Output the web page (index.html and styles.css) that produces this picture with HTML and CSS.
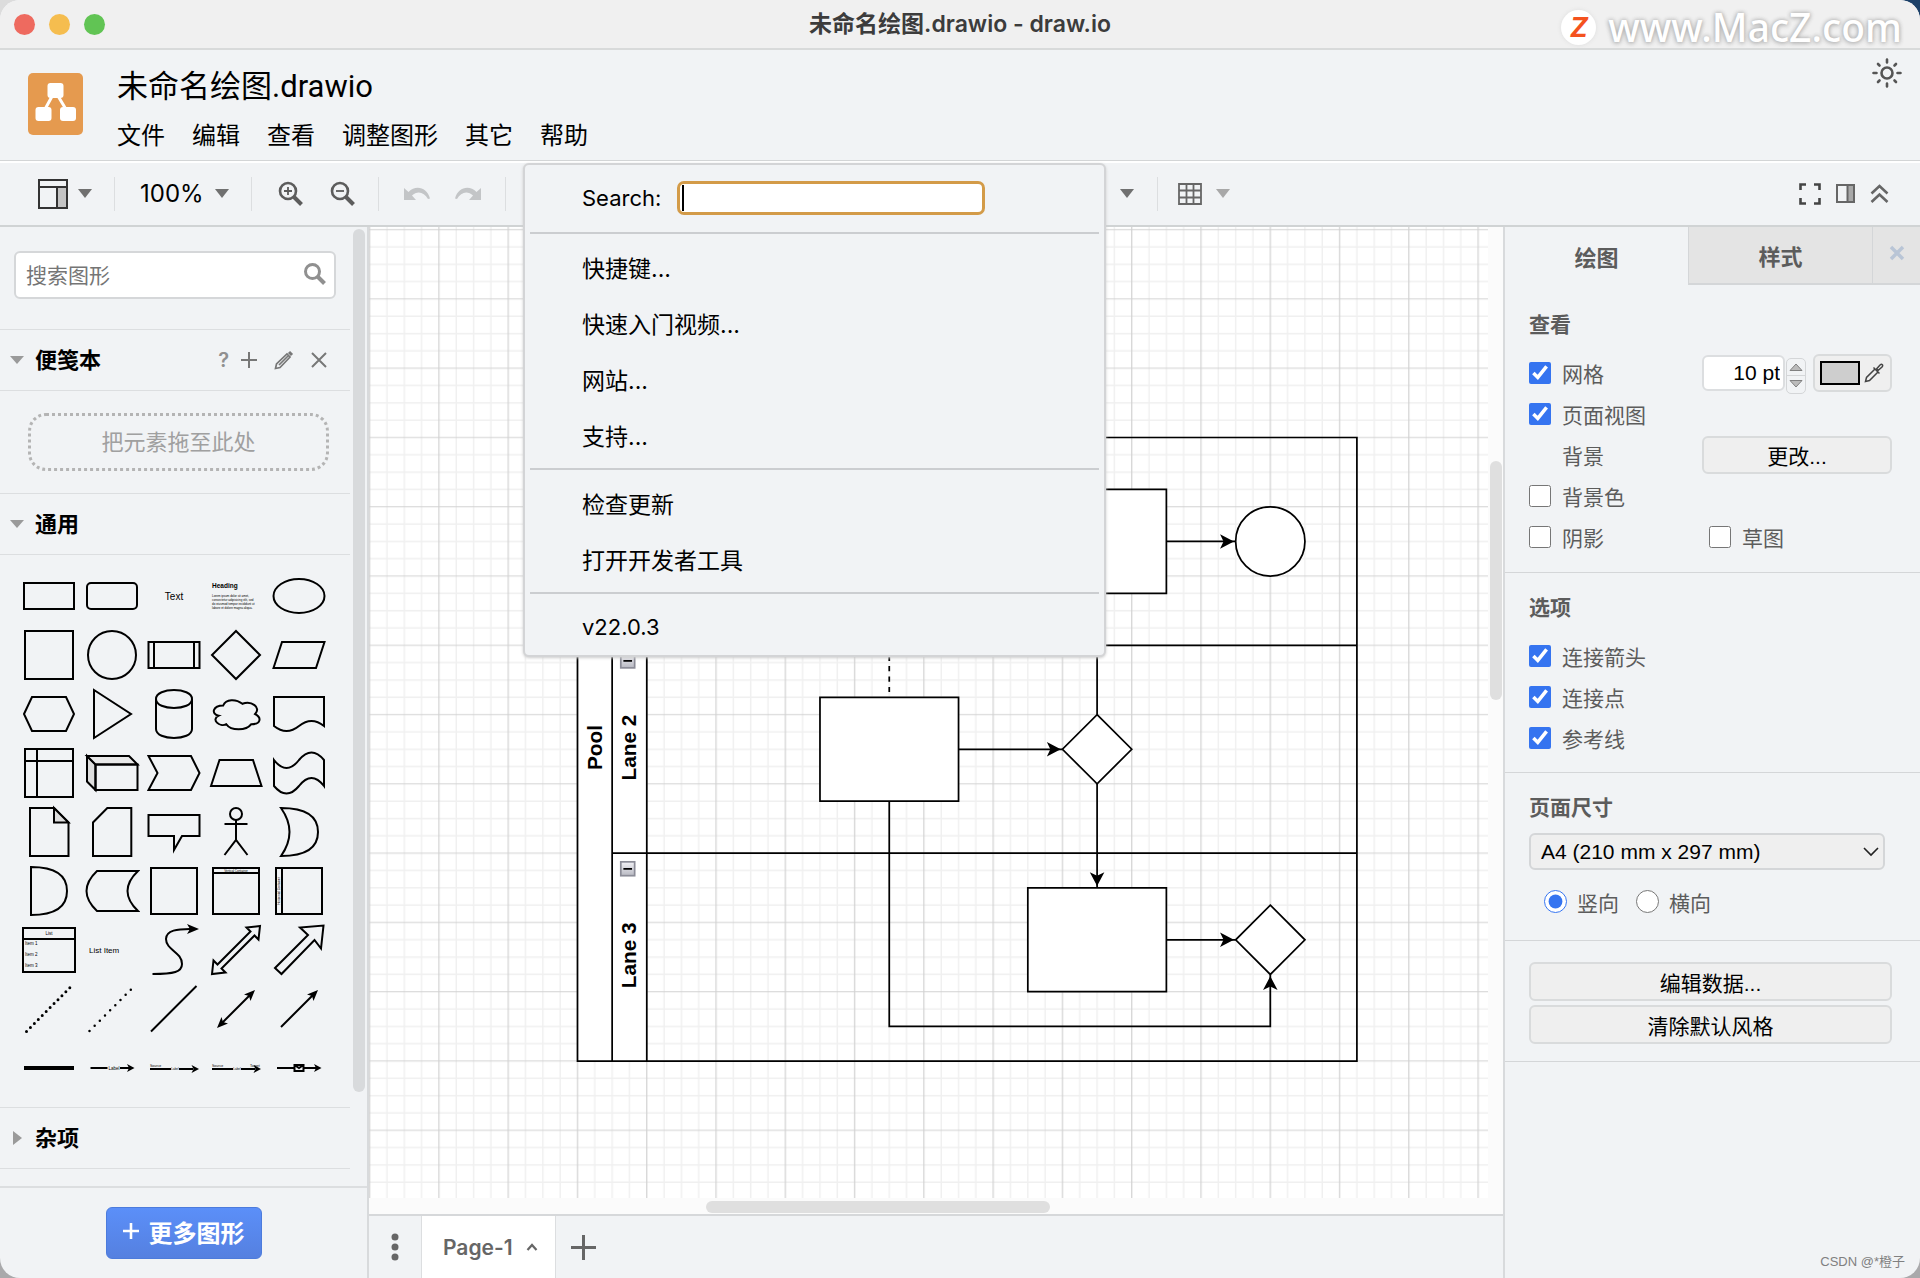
FILE: index.html
```html
<!DOCTYPE html>
<html lang="zh-CN">
<head>
<meta charset="utf-8">
<title>未命名绘图.drawio - draw.io</title>
<link rel="stylesheet" href="styles.css">
</head>
<body>
<div class="window">
  <header class="titlebar">
    <div class="lights"><span class="light red"></span><span class="light amber"></span><span class="light green"></span></div>
    <h1 class="window-title">未命名绘图.drawio - draw.io</h1>
    <div class="site-mark"><span class="site-logo">Z</span><span>www.MacZ.com</span></div>
  </header>

  <div class="appbar">
    <svg class="logo" viewBox="0 0 55 62" aria-hidden="true">
      <rect width="55" height="62" rx="5" fill="#e59a4f"/>
      <path d="M27 18 16 38M27 18 39 38" stroke="#fff" stroke-width="3"/>
      <g fill="#fff"><rect x="19.500" y="10" width="16" height="15" rx="3"/><rect x="7.500" y="34" width="16" height="14" rx="3"/><rect x="32" y="34" width="16" height="14" rx="3"/></g>
    </svg>
    <div class="doc">
      <h2 class="doc-name">未命名绘图.drawio</h2>
      <nav class="menubar">
        <button>文件</button><button>编辑</button><button>查看</button><button>调整图形</button><button>其它</button>
        <div class="menu-holder">
          <button>帮助</button>
          <div class="menu">
            <div class="menu-search"><label for="help-search">Search:</label><span class="search-field"><input id="help-search" type="text"><i class="text-cursor"></i></span></div>
            <hr>
            <button>快捷键...</button><button>快速入门视频...</button><button>网站...</button><button>支持...</button>
            <hr>
            <button>检查更新</button><button>打开开发者工具</button>
            <hr>
            <button class="version">v22.0.3</button>
          </div>
        </div>
      </nav>
    </div>
    <button class="theme" aria-label="外观">
      <svg width="30" height="30" viewBox="-15 -15 30 30" fill="none" stroke="#555" stroke-width="2.600" stroke-linecap="round"><circle r="5.500"/><path d="M0-13v-.5M0 13v.5M-13 0h-.5M13 0h.5M0-10.500v-2.500M0 10.500v2.500M-10.500 0h-2.500M10.500 0h2.500M-7.500-7.500-9-9M7.500-7.500 9-9M-7.500 7.500-9 9M7.500 7.500 9 9"/></svg>
    </button>
  </div>

  <div class="toolbar">
    <div class="tools-left">
      <button class="tool view" aria-label="视图"><svg width="30" height="30" viewBox="0 0 30 30"><path d="M19 8h10v21H19z" fill="#c4c4c4"/><path d="M1 1h28v28H1zM1 8h28M19 8v21" fill="none" stroke="#333" stroke-width="2"/></svg><i class="caret"></i></button>
      <span class="divider"></span>
      <button class="tool zoom-level">100%<i class="caret"></i></button>
      <span class="divider"></span>
      <button class="tool lens" aria-label="放大"><svg width="25" height="25" viewBox="0 0 25 25" fill="none" stroke="#5c5c5c"><circle cx="10" cy="10" r="8" stroke-width="2.600"/><path d="m16 16 7.500 7.500" stroke-width="4"/><path d="M10 6v8M6 10h8" stroke-width="1.800"/></svg></button>
      <button class="tool lens" aria-label="缩小"><svg width="25" height="25" viewBox="0 0 25 25" fill="none" stroke="#5c5c5c"><circle cx="10" cy="10" r="8" stroke-width="2.600"/><path d="m16 16 7.500 7.500" stroke-width="4"/><path d="M6 10h8" stroke-width="1.800"/></svg></button>
      <span class="divider"></span>
      <button class="tool arrow-tool" aria-label="撤销"><svg width="26" height="13" viewBox="0 0 26 13" fill="#c3c5c7"><path d="M0 1v12h12L8 8.500C13 3.500 20 4.500 24 12l2-.5C23 .5 12-2.500 4.500 5z"/></svg></button>
      <button class="tool arrow-tool" aria-label="重做"><svg width="26" height="13" viewBox="0 0 26 13" fill="#c3c5c7"><path d="M26 1v12H14l4-4.500C13 3.500 6 4.500 2 12l-2-.5C3 .5 14-2.500 21.500 5z"/></svg></button>
      <span class="divider"></span>
    </div>
    <div class="tools-mid">
      <button class="tool" aria-label="插入"><i class="caret"></i></button>
      <span class="divider"></span>
      <button class="tool grid-tool" aria-label="表格"><svg width="24" height="22" viewBox="0 0 24 22"><path d="M1 1h22v20H1zM1 7.500h22M1 14.500h22M8.500 1v20M15.500 1v20" fill="none" stroke="#666" stroke-width="1.800"/></svg><i class="caret pale"></i></button>
    </div>
    <div class="tools-right">
      <button class="tool" aria-label="全屏"><svg width="22" height="22" viewBox="0 0 22 22" fill="none" stroke="#444" stroke-width="2.600"><path d="M1.500 7V1.500H7M15 1.500h5.500V7M20.500 15v5.500H15M7 20.500H1.500V15"/></svg></button>
      <button class="tool" aria-label="格式"><svg width="19" height="19" viewBox="0 0 19 19"><path d="M12 1h6v17h-6z" fill="#a8a8a8"/><path d="M1 1h17v17H1zM11.500 1v17" fill="none" stroke="#666" stroke-width="2"/></svg></button>
      <button class="tool" aria-label="折叠"><svg width="19" height="19" viewBox="0 0 19 19" fill="none" stroke="#666" stroke-width="2.600"><path d="m1.500 9.500 8-7.500 8 7.500M1.500 18l8-7.500 8 7.500"/></svg></button>
    </div>
  </div>

  <main class="workspace">
    <aside class="sidebar">
      <div class="scroller">
        <div class="sections">
          <div class="shape-search">
            <input type="search" placeholder="搜索图形" aria-label="搜索图形">
            <svg width="22" height="22" viewBox="0 0 22 22" fill="none" stroke="#909090"><circle cx="8.500" cy="8.500" r="7" stroke-width="3"/><path d="m13.500 13.500 7 7" stroke-width="4"/></svg>
          </div>
          <div class="section-head">
            <i class="fold open"></i><span class="section-name">便笺本</span>
            <span class="head-tools">
              <button class="help">?</button>
              <button aria-label="添加"><svg width="16" height="16" viewBox="0 0 16 16"><path d="M8 0v16M0 8h16" stroke="#777" stroke-width="2"/></svg></button>
              <button aria-label="编辑"><svg width="20" height="20" viewBox="0 0 20 20" fill="none" stroke="#777" stroke-width="1.700"><path d="m1.500 18.500 1-4.500L13 4l3 3L6 17.500zM5 15 14 6"/><path d="m15 2 3 3" stroke-width="3"/></svg></button>
              <button aria-label="关闭"><svg width="16" height="16" viewBox="0 0 16 16"><path d="m1 1 14 14M15 1 1 15" stroke="#777" stroke-width="2"/></svg></button>
            </span>
          </div>
          <div class="scratch"><div class="dropzone">把元素拖至此处</div></div>
          <div class="section-head"><i class="fold open"></i><span class="section-name">通用</span></div>
          <div class="palette">
            <svg viewBox="-28 -28 56 56"><path d="M-25-13h50v26h-50z"/></svg>
            <svg viewBox="-28 -28 56 56"><rect x="-25" y="-13" width="50" height="26" rx="4"/></svg>
            <svg viewBox="-28 -28 56 56"><text x="0" y="4" font-size="10" text-anchor="middle">Text</text></svg>
            <svg viewBox="-28 -28 56 56"><text x="-24" y="-8" font-size="6.500" font-weight="bold">Heading</text><g font-size="3"><text x="-24" y="1">Lorem ipsum dolor sit amet,</text><text x="-24" y="5">consectetur adipisicing elit, sed</text><text x="-24" y="9">do eiusmod tempor incididunt ut</text><text x="-24" y="12.500">labore et dolore magna aliqua.</text></g></svg>
            <svg viewBox="-28 -28 56 56"><ellipse rx="25.500" ry="17"/></svg>

            <svg viewBox="-28 -28 56 56"><path d="M-24-24h48v48h-48z"/></svg>
            <svg viewBox="-28 -28 56 56"><circle r="24"/></svg>
            <svg viewBox="-28 -28 56 56"><path d="M-25.500-13h51v26h-51zM-20-13v26M20-13v26"/></svg>
            <svg viewBox="-28 -28 56 56"><path d="M0-24 24 0 0 24-24 0z"/></svg>
            <svg viewBox="-28 -28 56 56"><path d="M-25.500 13-17-13h42.500L17 13z"/></svg>

            <svg viewBox="-28 -28 56 56"><path d="M-25 0-17-17h34L25 0l-8 17h-34z"/></svg>
            <svg viewBox="-28 -28 56 56"><path d="M-18-24 19 0-18 24z"/></svg>
            <svg viewBox="-28 -28 56 56"><path d="M-18-15v30c0 12 36 12 36 0v-30c0-12-36-12-36 0 0 12 36 12 36 0"/></svg>
            <svg viewBox="-28 -28 56 56"><path d="M-12.800-8.500C-23-8.500-25.500 0-17.300 1.700-25.500 5.400-16.300 13.600-9.700 10.200-5.100 17 10.200 17 15.300 10.200 25.500 10.200 25.500 3.400 19.100 0 25.500-6.800 15.300-13.600 6.400-10.200 0-15.300-10.200-15.300-12.800-8.500z"/></svg>
            <svg viewBox="-28 -28 56 56"><path d="M-25-17h50v29Q12.500 2 0 12-12.500 22-25 12z"/></svg>

            <svg viewBox="-28 -28 56 56"><path d="M-24-24h48v48h-48zM-12-24v48M-24-12h48"/></svg>
            <svg viewBox="-28 -28 56 56"><path fill="#ddd" d="M-25-17l8.500 8.500V17l-8.500-8.500z"/><path fill="#e8e8e8" d="M-25-17h42l8.500 8.500h-42z"/><path d="M-16.500-8.500h42V17h-42z"/></svg>
            <svg viewBox="-28 -28 56 56"><path d="M-25.500-17H17L25.500 0 17 17h-42.500l9-17z"/></svg>
            <svg viewBox="-28 -28 56 56"><path d="M-25 13-16.500-13H17l8.500 26z"/></svg>
            <svg viewBox="-28 -28 56 56"><path d="M-25-13Q-12.500 3 0-13 12.500-28 25-13v26Q12.500-3 0 13-12.500 28-25 13z"/></svg>

            <svg viewBox="-28 -28 56 56"><path d="M-19-24H5L19.500-9.500V24H-19z"/><path fill="#ddd" d="M5-24v14.500h14.500z"/></svg>
            <svg viewBox="-28 -28 56 56"><path d="M-4.700-24h24v48H-19V-9.500z"/></svg>
            <svg viewBox="-28 -28 56 56"><path d="M-25.500-17h51V4H8L0 18V4h-25.500z"/></svg>
            <svg viewBox="-28 -28 56 56"><circle cy="-18" r="6"/><path d="M0-12V8M-11.500-8h23M-11.500 23 0 8l11.500 15"/></svg>
            <svg viewBox="-28 -28 56 56"><path d="M-18-24Q19-24 19 0 19 24-18 24-1 0-18-24z"/></svg>

            <svg viewBox="-28 -28 56 56"><path d="M-18-24C8-24 18-14 18 0S8 24-18 24z"/></svg>
            <svg viewBox="-28 -28 56 56"><path d="M-15-20h41Q5 0 26 20h-41Q-36 0-15-20z"/></svg>
            <svg viewBox="-28 -28 56 56"><path d="M-23-23h46v46h-46z"/></svg>
            <svg viewBox="-28 -28 56 56"><path d="M-23-23h46v46h-46zM-23-18h46"/><text x="0" y="-19.500" font-size="3" text-anchor="middle">Vertical Container</text></svg>
            <svg viewBox="-28 -28 56 56"><path d="M-23-23h46v46h-46zM-17-23v46"/><text transform="rotate(-90)" x="0" y="-19" font-size="3" text-anchor="middle">Horizontal Container</text></svg>

            <svg viewBox="-28 -28 56 56"><path d="M-26-22h52v44h-52zM-26-11h52"/><g font-size="4.500"><text x="0" y="-15" text-anchor="middle">List</text><text x="-24" y="-5">Item 1</text><text x="-24" y="6">Item 2</text><text x="-24" y="17">Item 3</text></g></svg>
            <svg viewBox="-28 -28 56 56"><text x="-23" y="3" font-size="8">List Item</text></svg>
            <svg viewBox="-28 -28 56 56"><path d="M-21.500 24C0 24 8 22 8 14 8 2-8 0-8-11-8-20 4-21 16-21"/><path class="solid" d="M25-21 13-26l3 5-3 5z"/></svg>
            <svg viewBox="-28 -28 56 56"><path d="M24-24 10.500-22.500l4 4-33 33-4-4L-24 24l13.500-1.500-4-4 33-33 4 4z"/></svg>
            <svg viewBox="-28 -28 56 56"><path d="M-24 18l6.500 6 33-34 6.500 8.500 2.500-23L1-22.500 9-15z"/></svg>

            <svg viewBox="-28 -28 56 56"><path d="M-22.500 22.500 21-21.500" stroke-width="3" stroke-linecap="round" stroke-dasharray="0 5.600"/></svg>
            <svg viewBox="-28 -28 56 56"><path d="M-22.500 22 19-19.500" stroke-width="2.500" stroke-linecap="round" stroke-dasharray="0 7.300"/></svg>
            <svg viewBox="-28 -28 56 56"><path d="M-23 22.500 22.500-23"/></svg>
            <svg viewBox="-28 -28 56 56"><path d="M-14 14 14-14"/><path class="solid" d="M19-19 8-14.500l5 1.500 1.500 5zM-19 19l4.500-11 1.500 5 5 1.500z"/></svg>
            <svg viewBox="-28 -28 56 56"><path d="M-18 18 14-14"/><path class="solid" d="M19-19 8-14.500l5 1.500 1.500 5z"/></svg>

            <svg viewBox="-28 -28 56 56"><path d="M-25 0h50" stroke-width="4"/></svg>
            <svg viewBox="-28 -28 56 56"><path d="M-21.500 0h17M8 0h9"/><path class="solid" d="M22.500 0 15-4 17 0l-2 4z"/><text x="2" y="2" font-size="4.500" text-anchor="middle">Label</text></svg>
            <svg viewBox="-28 -28 56 56"><path d="M-24 1h21M5 1h14"/><path class="solid" d="M25 1 17.500-3 19.500 1l-2 4z"/><text x="-24" y="-1" font-size="3.500">Source</text><text x="1" y="2" font-size="3" text-anchor="middle">Label</text></svg>
            <svg viewBox="-28 -28 56 56"><path d="M-24 1h21M5 1h14"/><path class="solid" d="M25 1 17.500-3 19.500 1l-2 4z"/><g font-size="3.500"><text x="-24" y="-1">Source</text><text x="1" y="2" font-size="3" text-anchor="middle">Label</text><text x="14" y="-1">Target</text></g></svg>
            <svg viewBox="-28 -28 56 56"><path d="M-22 0h17M5 0h12M-4.500-3h9v6h-9zL0 0l4.500-3"/><path class="solid" d="M22.500 0 15-4 17 0l-2 4z"/></svg>
          </div>
          <div class="section-head"><i class="fold"></i><span class="section-name">杂项</span></div>
        </div>
        <span class="side-thumb"></span>
      </div>
      <div class="side-foot"><button class="more"><svg width="16" height="16" viewBox="0 0 16 16"><path d="M8 0v16M0 8h16" stroke="#fff" stroke-width="2.600"/></svg>更多图形</button></div>
    </aside>

    <section class="center">
      <div class="canvas">
        <svg class="drawing" width="100%" height="100%">
          <defs>
            <pattern id="grid" x="-5" y="-5" width="40" height="40" patternUnits="userSpaceOnUse">
              <path d="M15 0v40M25 0v40M35 0v40M0 15h40M0 25h40M0 35h40" stroke="#f0f0f0" stroke-width=".8"/>
              <path d="M5 0v40M0 5h40" stroke="#d2d2d2" stroke-width=".7"/>
            </pattern>
            <marker id="arrow" viewBox="-10 -5 11 10" markerWidth="11" markerHeight="10" refX="0" refY="0" orient="auto"><path d="M-1 0-9-4.200-7 0l-2 4.200z"/></marker>
            <linearGradient id="fold-fill" x2="0" y2="1"><stop stop-color="#f2f2f6"/><stop offset="1" stop-color="#b8b9c2"/></linearGradient>
          </defs>
          <g transform="translate(208.500 210.500) scale(1.732)">
            <rect x="-130" y="-130" width="2000" height="1500" fill="url(#grid)"/>
            <path d="M0 0h40v360H0z" fill="#fff"/>
            <g fill="none" stroke="#000">
              <path d="M0 0h450v360H0zM20 0v360M40 0v360M20 120h430M20 240h430"/>
              <path d="M180 90v58" stroke-dasharray="3 3"/>
              <path d="M300 90v70"/>
              <g marker-end="url(#arrow)"><path d="M340 60h40"/><path d="M220 180h60"/><path d="M300 200v60"/><path d="M340 290h40"/><path d="M180 210v130h220v-30"/></g>
            </g>
            <g fill="#fff" stroke="#000">
              <path d="M260 30h80v60h-80zM140 150h80v60h-80zM260 260h80v60h-80zM300 160l20 20-20 20-20-20zM400 270l20 20-20 20-20-20z"/>
              <circle cx="400" cy="60" r="20"/>
            </g>
            <g fill="url(#fold-fill)" stroke="#8c8d98"><rect x="25" y="125" width="8" height="8"/><rect x="25" y="245" width="8" height="8"/></g>
            <path d="M26.500 129h5M26.500 249h5" stroke="#000"/>
            <g class="lane-names"><text transform="translate(14 179) rotate(-90)">Pool</text><text transform="translate(34 179) rotate(-90)">Lane 2</text><text transform="translate(34 299) rotate(-90)">Lane 3</text></g>
          </g>
        </svg>
        <div class="track-v"><span class="thumb-v"></span></div>
        <div class="track-h"><span class="thumb-h"></span></div>
      </div>
      <div class="pages">
        <button class="page-menu" aria-label="页面"><svg width="8" height="28" viewBox="0 0 8 28" fill="#666"><circle cx="4" cy="4" r="3.500"/><circle cx="4" cy="14" r="3.500"/><circle cx="4" cy="24" r="3.500"/></svg></button>
        <button class="page-tab">Page-1<svg width="12" height="8" viewBox="0 0 12 8"><path d="m1.500 7 4.500-5 4.500 5" fill="none" stroke="#666" stroke-width="2.200"/></svg></button>
        <button class="page-add" aria-label="新页面"><svg width="25" height="25" viewBox="0 0 25 25"><path d="M12.500 0v25M0 12.500h25" stroke="#666" stroke-width="3"/></svg></button>
      </div>
    </section>

    <aside class="format">
      <div class="tabs"><button class="tab current">绘图</button><button class="tab">样式</button><button class="tab-close" aria-label="关闭"><svg width="16" height="16" viewBox="0 0 16 16"><path d="m2 2 12 12M14 2 2 14" stroke="#b9c5d6" stroke-width="3.500"/></svg></button></div>
      <div class="group first">
        <h3>查看</h3>
        <div class="row"><label class="check"><input type="checkbox" checked>网格</label>
          <div class="grid-controls">
            <input class="size" type="text" value="10 pt" aria-label="网格大小">
            <span class="stepper"><button aria-label="增加"><svg width="14" height="8" viewBox="0 0 14 8"><path d="M1 7.500h12L7 1z" fill="#bbb" stroke="#808080"/></svg></button><button aria-label="减少"><svg width="14" height="8" viewBox="0 0 14 8"><path d="M1 .5h12L7 7z" fill="#bbb" stroke="#808080"/></svg></button></span>
            <button class="color" aria-label="网格颜色"><span class="swatch"></span><svg width="20" height="20" viewBox="0 0 20 20" fill="none" stroke="#444" stroke-width="1.500"><path d="M11 6 2.500 14.500 1.500 18.500 5.500 17.500 14 9"/><path d="m9.500 4.500 6 6"/><path d="m12.500 6 3.500-4c2-1.500 3.500 0 2 2l-4 3.500z"/></svg></button>
          </div>
        </div>
        <div class="row"><label class="check"><input type="checkbox" checked>页面视图</label></div>
        <div class="row"><span class="indent">背景</span><button class="push change">更改...</button></div>
        <div class="row"><label class="check"><input type="checkbox">背景色</label></div>
        <div class="row"><label class="check"><input type="checkbox">阴影</label><label class="check sketch"><input type="checkbox">草图</label></div>
      </div>
      <div class="group">
        <h3>选项</h3>
        <div class="row"><label class="check"><input type="checkbox" checked>连接箭头</label></div>
        <div class="row"><label class="check"><input type="checkbox" checked>连接点</label></div>
        <div class="row"><label class="check"><input type="checkbox" checked>参考线</label></div>
      </div>
      <div class="group paper">
        <h3><label for="paper">页面尺寸</label></h3>
        <div class="select"><select id="paper"><option>A4 (210 mm x 297 mm)</option></select><svg width="16" height="10" viewBox="0 0 16 10"><path d="m1 1 7 7 7-7" fill="none" stroke="#222" stroke-width="1.600"/></svg></div>
        <div class="row radios"><label><input type="radio" name="way" checked>竖向</label><label><input type="radio" name="way">横向</label></div>
      </div>
      <div class="group actions"><button class="push">编辑数据...</button><button class="push">清除默认风格</button></div>
    </aside>
  </main>
  <span class="credit">CSDN @*橙子</span>
</div>
</body>
</html>
```
FILE: styles.css
```css
* { box-sizing: border-box; }
html {
  background: linear-gradient(to right, #dcdcdc 50%, #1b4068 50%) top / 100% 50% no-repeat, #a9a9ab;
}
body {
  margin: 0;
  font-family: Inter, "Noto Sans CJK SC", sans-serif;
  color: #000;
}
button, input, select { font: inherit; color: inherit; }
button { border: 0; padding: 0; background: none; }
svg { display: block; flex: none; }
h1, h2, h3 { margin: 0; }

.window {
  position: relative;
  display: flex;
  flex-direction: column;
  min-height: 100vh;
  overflow: hidden;
  border-radius: 20px;
  background: #f1f3f5;
}

/* Title bar */
.titlebar {
  position: relative;
  display: flex;
  align-items: center;
  justify-content: center;
  height: 50px;
  border-bottom: 2px solid #d8dada;
  background: #f0f0f0;
}
.lights { position: absolute; left: 14px; display: flex; gap: 14px; }
.light { width: 21px; height: 21px; border-radius: 50%; }
.red { background: #ee6a5f; }
.amber { background: #f5bd4f; }
.green { background: #61c454; }
.window-title { font-size: 23px; font-weight: 600; line-height: 30px; color: #3c3c3c; }
.site-mark {
  position: absolute;
  right: 18px;
  display: flex;
  align-items: center;
  gap: 12px;
  padding-top: 6px;
  font-family: "Noto Sans", sans-serif;
  font-size: 39px;
  font-weight: 500;
  line-height: 44px;
  color: #fff;
  text-shadow: 0 0 4px #aaa, 0 1px 5px #bbb;
}
.site-logo {
  width: 35px;
  height: 35px;
  border-radius: 50%;
  background: #fff;
  box-shadow: 0 0 4px #ddd;
  font: italic bold 27px/35px Inter, sans-serif;
  text-align: center;
  color: #f4521e;
  text-shadow: none;
}

/* Document name and menus */
.appbar {
  display: flex;
  height: 111px;
  padding: 0 18px 0 28px;
  border-bottom: 1px solid #d3d5d6;
}
.logo { width: 55px; height: 62px; margin-top: 23px; }
.doc { flex: 1; padding: 15px 0 0 34px; }
.doc-name { font-size: 31px; font-weight: 400; line-height: 44px; font-family: Roboto, "Noto Sans CJK SC", sans-serif; }
.menubar { display: flex; gap: 27px; margin-top: 9px; }
.menubar > button, .menu-holder > button { font-size: 24px; line-height: 36px; }
.menu-holder { position: relative; }
.theme { align-self: flex-start; margin-top: 8px; }

.menu {
  position: absolute;
  z-index: 5;
  top: 45px;
  left: -17px;
  width: 583px;
  border: 2px solid #d3d4d6;
  border-radius: 6px;
  background: #f1f3f5;
  box-shadow: 0 1px 3px #ccc;
}
.menu > button { display: block; width: 100%; height: 56px; padding-left: 57px; font-size: 23px; text-align: left; }
.menu > .version { font-size: 22px; }
.menu hr { height: 2px; margin: 5px; border: 0; background: #cbcdd0; }
.menu-search { display: flex; align-items: center; gap: 16px; height: 62px; padding: 4px 0 0 57px; font-size: 22px; }
.search-field { position: relative; display: flex; }
.search-field input { width: 308px; height: 34px; border: 3px solid #d39b48; border-radius: 7px; background: #fff; }
.text-cursor { position: absolute; left: 5px; top: 4px; width: 2px; height: 26px; background: #000; }

/* Toolbar */
.toolbar {
  display: flex;
  align-items: center;
  height: 66px;
  padding: 0 31px 1px 38px;
  border-top: 2px solid #fff;
  border-bottom: 2px solid #d0d3d4;
}
.tool { display: flex; align-items: center; }
.divider { width: 1px; height: 34px; background: #dcdee0; }
.caret { border: solid transparent; border-width: 9px 7px 0; border-top-color: #707070; }
.caret.pale { border-top-color: #a8a8a8; }
.tools-left { display: flex; align-items: center; flex: 0 0 1082px; }
.view { gap: 10px; margin-right: 22px; }
.zoom-level { gap: 11px; padding: 0 22px 0 25px; font-size: 24px; }
.divider + .lens { margin-left: 26px; }
.lens { margin-right: 27px; }
.lens + .divider { margin-left: -4px; }
.arrow-tool { margin-left: 25px; }
.arrow-tool + .divider { margin-left: 24px; }
.tools-mid { display: flex; align-items: center; flex: 1; }
.tools-mid .divider { margin: 0 20px 0 23px; }
.grid-tool { gap: 14px; }
.tools-right { display: flex; align-items: center; gap: 15px; }

/* Shape library */
.workspace { display: flex; flex: 1; min-height: 0; }
.sidebar { display: flex; flex-direction: column; flex: 0 0 369px; border-right: 2px solid #d8dadc; }
.scroller { position: relative; flex: 1; }
.sections { margin-right: 17px; }
.shape-search { position: relative; padding: 24px 14px 30px; border-bottom: 1px solid #dcdee0; }
.shape-search input {
  display: block;
  width: 100%;
  height: 48px;
  padding: 0 10px;
  border: 2px solid #d5d7d9;
  border-radius: 6px;
  background: #fff;
  font-size: 21px;
}
.shape-search input::placeholder { color: #757575; opacity: 1; }
.shape-search svg { position: absolute; right: 24px; top: 36px; }
.section-head { display: flex; align-items: center; height: 61px; padding-left: 10px; border-bottom: 1px solid #dcdee0; }
.section-name { flex: 1; font-size: 22px; font-weight: 600; line-height: 32px; }
.fold { flex: 0 0 25px; height: 14px; }
.fold::before { content: ""; display: block; width: 0; margin-left: 3px; border: solid transparent; border-width: 7px 0 7px 9px; border-left-color: #9a9a9a; }
.fold.open { height: 8px; }
.fold.open::before { margin-left: 0; border-width: 8px 7px 0; border-color: #9a9a9a transparent transparent; }
.head-tools { display: flex; align-items: center; gap: 17px; padding-right: 23px; }
.help { margin-right: -5px; font-size: 20px; font-weight: 600; color: #909090; }
.scratch { padding: 22px 21px 22px 28px; border-bottom: 1px solid #dcdee0; }
.dropzone {
  height: 58px;
  border: 3px dotted #b4b4b4;
  border-radius: 18px;
  font-size: 22px;
  line-height: 52px;
  text-align: center;
  color: #a0a0a0;
}
.palette {
  display: grid;
  grid-template-columns: repeat(5, 1fr);
  grid-auto-rows: 59px;
  place-items: center;
  padding: 11px 20px 10px 18px;
  border-bottom: 1px solid #dcdee0;
}
.palette svg { width: 56px; height: 56px; fill: none; stroke: #000; stroke-width: 2px; }
.palette text { fill: #000; stroke: none; font-family: "Liberation Sans", sans-serif; }
.palette .solid { fill: #000; stroke: none; }
.side-thumb { position: absolute; right: 2px; top: 2px; bottom: 94px; width: 12px; border-radius: 6px; background: #d8dadc; }
.side-foot { display: flex; justify-content: center; height: 92px; padding-top: 19px; border-top: 2px solid #dcdee0; }
.more {
  display: flex;
  align-items: center;
  gap: 10px;
  height: 52px;
  padding: 0 16px 4px;
  border: 1px solid #4c7bdc;
  border-radius: 6px;
  background: linear-gradient(#5b8ff9, #5580e0);
  color: #fff;
  font-size: 24px;
  font-weight: 600;
}

/* Drawing area */
.center { display: flex; flex: 1; flex-direction: column; min-width: 0; }
.canvas { display: grid; flex: 1; grid-template: 1fr 16px / 1fr 15px; min-height: 0; background: #fff; }
.drawing { min-width: 0; overflow: hidden; }
.lane-names { font: bold 12px "Liberation Sans", sans-serif; text-anchor: middle; }
.track-v, .track-h { background: #fbfbfb; }
.track-v { grid-row: span 2; grid-column: 2; padding: 234px 1px 0 2px; }
.track-h { padding: 3px 0 0 337px; }
.thumb-v { display: block; height: 239px; border-radius: 6px; background: #dfdfdf; }
.thumb-h { display: block; width: 344px; height: 12px; border-radius: 6px; background: #dfdfdf; }
.pages { display: flex; height: 64px; border-top: 2px solid #d6d8da; color: #666; }
.page-menu { display: grid; place-items: center; width: 52px; }
.page-tab {
  display: flex;
  align-items: center;
  gap: 13px;
  padding: 0 17px 0 21px;
  border: solid #dcdee0;
  border-width: 0 1px;
  background: #fff;
  font-size: 21px;
  font-weight: 600;
}
.page-add { margin-left: 15px; }

/* Format panel */
.format {
  flex: 0 0 417px;
  border-left: 2px solid #d8dadc;
  font-family: "Liberation Sans", "Noto Sans CJK SC", sans-serif;
  font-size: 21px;
  color: #5c5c5c;
}
.tabs { display: flex; height: 58px; }
.tab { flex: 1; border: solid #d4d6d8; border-width: 0 0 2px 1px; background: #e4e4e4; font-size: 22px; font-weight: 600; }
.tab.current { border: 0; background: none; }
.tab-close { display: grid; place-items: center; width: 48px; padding-bottom: 4px; border: solid #d4d6d8; border-width: 0 0 2px 1px; background: #e4e4e4; }
.group { padding: 15px 28px 14px 24px; border-bottom: 1px solid #d4d6d8; }
.group.first { padding-top: 20px; padding-bottom: 15px; }
.group h3 { margin-bottom: 7px; font-size: 21px; font-weight: 600; line-height: 40px; }
.row { display: flex; align-items: center; height: 41px; }
.check { display: flex; align-items: center; gap: 11px; flex: 0 0 173px; }
.check input { width: 22px; height: 22px; margin: 0; accent-color: #3574f0; }
.check.sketch { margin-left: 7px; }
.indent { flex: 0 0 140px; margin-left: 33px; }
.grid-controls { display: flex; flex: 1; align-items: center; }
.size { width: 83px; height: 36px; padding: 0 3px; border: 2px solid #dcdee0; border-radius: 6px; background: #fff; color: #000; text-align: right; }
.stepper { display: flex; flex-direction: column; width: 20px; height: 36px; margin: 6px 7px 0 1px; border: 1px solid #d4d6d8; border-radius: 5px; }
.stepper button { display: grid; flex: 1; place-items: center; }
.stepper button + button { border-top: 1px solid #d4d6d8; }
.color { display: flex; flex: 1; align-items: center; gap: 4px; height: 38px; padding-left: 5px; border: 2px solid #d9dbdc; border-radius: 6px; background: #efefef; }
.swatch { width: 40px; height: 24px; border: 2px solid #000; background: #cecece; }
.push { height: 38px; border: 2px solid #d9dbdc; border-radius: 6px; background: #efefef; color: #000; }
.change { flex: 1; }
.paper { padding-bottom: 18px; }
.paper h3 { margin-bottom: 5px; }
.select { position: relative; margin-right: 7px; }
.select select { display: block; width: 100%; height: 37px; padding: 0 10px; border: 2px solid #d4d6d8; border-radius: 6px; background: #efefef; color: #000; appearance: none; }
.select svg { position: absolute; right: 6px; top: 14px; }
.radios { gap: 17px; margin-top: 11px; padding-left: 15px; }
.radios label { display: flex; align-items: center; gap: 10px; }
.radios input { width: 23px; height: 23px; margin: 0; accent-color: #3574f0; }
.actions { display: flex; flex-direction: column; gap: 4px; padding: 21px 28px 17px 24px; }
.actions .push { height: 39px; }

.credit { position: absolute; right: 15px; bottom: 6px; font-size: 13px; line-height: 20px; color: #808080; font-family: "Liberation Sans", "Noto Sans CJK SC", sans-serif; }
```
